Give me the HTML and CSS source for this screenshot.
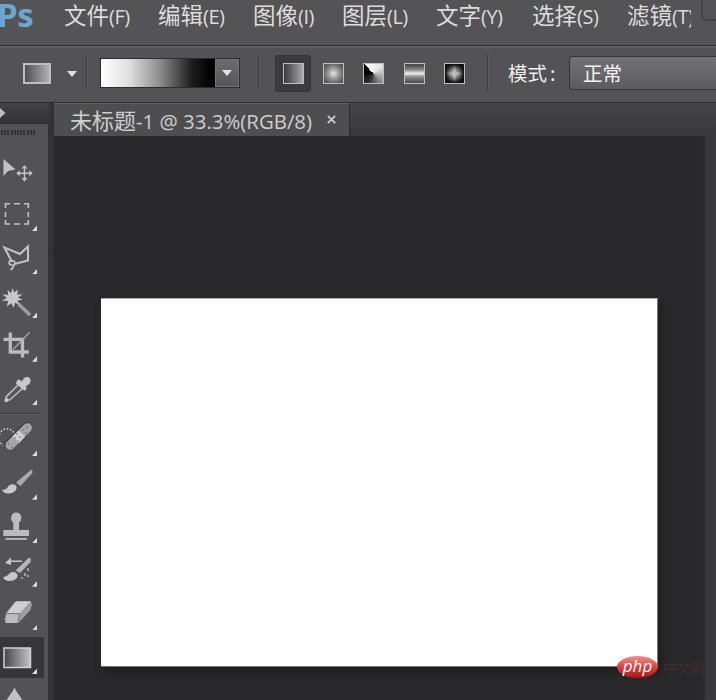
FILE: index.html
```html
<!DOCTYPE html>
<html lang="zh-CN">
<head>
<meta charset="utf-8">
<title>未标题-1</title>
<link rel="stylesheet" href="styles.css">
</head>
<body>
<div class="app">
  <header class="menubar">
    <div class="logo">Ps</div>
    <nav class="menus">
      <span>文件<i>(F)</i></span><span>编辑<i>(E)</i></span><span>图像<i>(I)</i></span><span>图层<i>(L)</i></span><span>文字<i>(Y)</i></span><span>选择<i>(S)</i></span><span class="cut">滤镜<i>(T)</i></span>
    </nav>
    <div class="window-corner"></div>
  </header>

  <section class="options">
    <div class="preset"></div>
    <div class="caret"></div>
    <div class="divider first"></div>
    <div class="picker"><div class="ramp"></div><div class="drop"><div class="caret"></div></div></div>
    <div class="divider second"></div>
    <div class="modes">
      <div class="mode on"><b class="linear"></b></div>
      <div class="mode"><b class="radial"></b></div>
      <div class="mode"><b class="angle"></b></div>
      <div class="mode"><b class="reflected"></b></div>
      <div class="mode"><b class="diamond"></b></div>
    </div>
    <div class="divider third"></div>
    <div class="label">模式<i>:</i></div>
    <div class="select">正常</div>
  </section>

  <main class="work">
    <aside class="toolbar">
      <div class="collapse"><svg width="6" height="10" viewBox="0 0 6 10"><path d="M0 0L5.500 5L0 10Z" fill="#bdbcbe"/></svg></div>
      <div class="grip"></div>
      <div class="tool"><svg viewBox="0 0 44 43.6">
        <path d="M3.500 10V27L8 22L15.500 20.500Z" fill="#c2c1c3"/>
        <path d="M24.500 17.500V31M17.500 24.200H31.500" stroke="#c2c1c3" stroke-width="1.500"/>
        <path d="M24.500 16l3 3.500h-6zM24.500 32.400l3-3.500h-6zM16.300 24.200l3.500-3v6zM32.700 24.200l-3.500-3v6z" fill="#c2c1c3"/>
      </svg></div>
      <div class="tool more"><svg viewBox="0 0 44 43.6">
        <path d="M5.500 15v-4.300H10M14 10.700h6M24 10.700h4.300V15M28.300 19v5M28.300 27v4H24M20 31h-6M10 31H5.500v-4M5.500 24v-5" fill="none" stroke="#c2c1c3" stroke-width="1.600"/>
      </svg></div>
      <div class="tool more"><svg viewBox="0 0 44 43.6">
        <path d="M12 26L4.500 11.500L20 18L28 10.500V24.500L14.500 28" fill="none" stroke="#c2c1c3" stroke-width="2.100"/>
        <path d="M9 25.500c4-2 7 0 5.500 2.500s-6 1-5.500-2.500M14 28.500c0 3-1 4-3.500 5.500" fill="none" stroke="#c2c1c3" stroke-width="1.600"/>
      </svg></div>
      <div class="tool more"><svg viewBox="0 0 44 43.6">
        <path d="M18.500 24L30 35" stroke="#9d9c9e" stroke-width="3.600"/>
        <path d="M12.500 8l1.700 4.600 3.800-3-.8 4.800 5.300.1-4.600 3 4.900 2.200-5.300.7 2.200 4.700-4.600-2.300-1.600 5.200-2-4.700-4.700 3 1.400-5.200-6.300-.5 5-2.500-4.500-3.800 5.800.8-.6-5 3.500 3.200z" fill="#c8c7c9"/>
      </svg></div>
      <div class="tool more"><svg viewBox="0 0 44 43.6">
        <path d="M10.300 8.500V28H28.800M3.500 15.300H22.500V33.500" fill="none" stroke="#bcbbbd" stroke-width="3.300"/>
        <path d="M13 25.500L29.500 8.500" stroke="#aaa9ab" stroke-width="1.300"/>
      </svg></div>
      <div class="tool more"><svg viewBox="0 0 44 43.6">
        <path d="M19 17L6.500 29.500L5.500 34L10 32.700L23 21" fill="#59585a" stroke="#c2c1c3" stroke-width="1.500"/>
        <path d="M17 13.500l2-1 3 2c1.500-3.500 3.500-5 6.500-4.200 2.500 1 3 4.500.5 7l-3 2 .5 3-2 1.500-8.500-7z" fill="#c8c7c9"/>
        <circle cx="6.500" cy="33" r="2" fill="#c8c7c9"/>
      </svg></div>
      <div class="rule"></div>
      <div class="tool more"><svg viewBox="0 0 44 43.6">
        <path d="M13.500 14.500A8 9 0 1 0 3 27.500" fill="none" stroke="#d5d4d6" stroke-width="1.500" stroke-dasharray="1.500 1.800"/>
        <path d="M9.500 26.500L27 9" stroke="#444345" stroke-width="10.500" stroke-linecap="round"/>
        <path d="M10 27.200L27.500 9.700" stroke="#a6a5a7" stroke-width="9" stroke-linecap="round"/>
        <path d="M12.500 18.500l6-6 6.500 6-6 6.500z" fill="#d0cfd1"/>
        <path d="M9 26h0M12 29h0M17 16h0M20 19h0M15 20h0M18 23h0M23 12h0M26 15h0M27 9h0" stroke="#646365" stroke-width="1.600" stroke-linecap="round"/>
      </svg></div>
      <div class="tool more"><svg viewBox="0 0 44 43.6">
        <path d="M31.500 7.500C32.500 8.500 33 9.500 32 11.500L20.500 24L16 20.500Z" fill="#aaa9ab"/>
        <path d="M2 28c4-.4 5-1.500 6.500-4 2-2.500 7-2.200 8 .5 1 4-3.500 7-7.500 7-4 .2-6-1.500-7-3.500z" fill="#c8c7c9"/>
      </svg></div>
      <div class="tool more"><svg viewBox="0 0 44 43.6">
        <path d="M13.300 17.500c-3.500-2-3-10 3-10s6.500 8 2.700 10v7.500h10V31H3.300v-6h10z" fill="#bcbbbd"/>
        <path d="M5.500 33.900H27" stroke="#c8c7c9" stroke-width="1.600"/>
      </svg></div>
      <div class="tool more"><svg viewBox="0 0 44 43.6">
        <path d="M5 14l6-5.500v3h11v1.500H11v3z" fill="#c8c7c9"/>
        <path d="M29 8.500l2 1.500-.5 3L20 24l-4.500-2.500z" fill="#b5b4b6"/>
        <path d="M3 28c4-.5 5-2 7-4 2.500-2 7-1 7.500 2s-3 6-7.500 6-6-2-7-4z" fill="#c8c7c9"/>
        <path d="M28 19v3M25 24v3M21 29h2M28 26v2" stroke="#bab9bb" stroke-width="1.500"/>
      </svg></div>
      <div class="tool more"><svg viewBox="0 0 44 43.6">
        <path d="M14.500 10.500L17 9H30.500L32 12L30.500 18L18.500 31H6L4.500 28L6 21Z" fill="#9e9da0"/>
        <path d="M16 9.500H30.500L19.500 21.500H6.500Z" fill="#cfced0"/>
        <path d="M6.500 21.500H19.500L17.500 31H5.500z" fill="#bbbabc"/>
        <path d="M6.500 21.500H19.500L18 31" fill="none" stroke="#777678"/>
      </svg></div>
      <div class="tool more on"><svg viewBox="0 0 44 43.6">
        <defs><linearGradient id="g"><stop offset="0" stop-color="#454446"/><stop offset="1" stop-color="#c4c3c5"/></linearGradient></defs>
        <rect x="4" y="12" width="26.500" height="19.500" fill="url(#g)" stroke="#d2d1d3" stroke-width="1.500"/>
      </svg></div>
      <div class="tool"><svg viewBox="0 0 44 43.6"><path d="M14.500 7.500C17 14 24 19 24 27H5c0-8 7-13 9.500-19.500z" fill="#c2c1c3"/></svg></div>
    </aside>

    <section class="document">
      <div class="tabs"><div class="tab"><span>未标题<i>-1 @ 33.3%(RGB/8)</i></span><svg class="close" width="9" height="9" viewBox="0 0 9 9"><path d="M.8.8L8.200 8.200M8.200.8L.8 8.200" stroke="#cfced0" stroke-width="1.700"/></svg></div></div>
      <div class="stage">
        <div class="pasteboard"><div class="canvas"></div></div>
        <div class="scroll"></div>
      </div>
    </section>
  </main>
  <div class="mark"><div class="badge">php</div><span>中文网</span></div>
</div>
</body>
</html>
```
FILE: styles.css
```css
* { box-sizing: border-box; }
body {
  margin: 0;
  background: #29282a;
  font-family: "Noto Sans CJK SC", sans-serif;
  color: #dddcde;
}
i { font-style: normal; }
.app {
  position: relative;
  width: 716px;
  height: 700px;
  overflow: hidden;
  display: flex;
  flex-direction: column;
}
.menubar {
  flex: 0 0 45px;
  display: flex;
  background: #545355;
}
.logo {
  width: 64px;
  margin-left: -3px;
  font: bold 33px/29px "Open Sans", sans-serif;
  letter-spacing: -.5px;
  color: #6ea6d2;
}
.menus {
  width: 632px;
  margin-left: 3px;
  display: grid;
  grid-template-columns: 94px 95px 89px 94px 96px 95px 66px;
  font-size: 22.5px;
  line-height: 29px;
  height: 34px;
  white-space: nowrap;
}
.menus i {
  font: 20px/29px "Open Sans", sans-serif;
  letter-spacing: -.5px;
}
.menus .cut { overflow: hidden; width: 64px; }
.window-corner {
  flex: 1;
  height: 21px;
  margin-left: 5px;
  border-left: 2px solid #434244;
  border-bottom: 2px solid #434244;
  border-bottom-left-radius: 5px;
}
.options {
  flex: 0 0 58px;
  display: flex;
  align-items: center;
  padding-left: 23px;
  background: #535254;
  border-top: 1px solid #333234;
  border-bottom: 1px solid #2f2e30;
  box-shadow: inset 0 1px #656466, inset 0 2px #5c5b5d;
}
.options > * { margin-top: -2px; flex-shrink: 0; }
.preset {
  width: 28px;
  height: 21px;
  border: 2px solid #bfbec0;
  background: linear-gradient(90deg, #504f51, #b0afb1);
}
.caret {
  width: 10px;
  height: 6px;
  background: #e2e1e3;
  clip-path: polygon(0 0, 100% 0, 50% 100%);
}
.preset + .caret { margin-left: 16px; margin-top: 0; }
.divider {
  width: 2px;
  height: 38px;
  background: #403f41;
  border-right: 1px solid #5c5b5d;
}
.first { margin-left: 9px; }
.second { margin-left: 18px; }
.third { margin-left: 14px; }
.picker {
  display: flex;
  width: 140px;
  height: 30px;
  margin-left: 12px;
  border: 1px solid #2d2c2e;
  background: #2d2c2e;
}
.ramp {
  width: 114px;
  background: linear-gradient(90deg, #fff, #dedede 25%, #8b8b8b 52%, #1c1c1c 80%, #000 96%);
}
.drop {
  flex: 1;
  display: flex;
  align-items: center;
  justify-content: center;
  background: linear-gradient(#6c6b6d, #565557);
  border: 1px solid #737274;
}
.modes {
  display: flex;
  margin-left: 15px;
  gap: 4px;
}
.mode {
  display: flex;
  width: 36.4px;
  height: 37px;
  align-items: center;
  justify-content: center;
}
.mode.on {
  background: #3b3a3c;
  border: 1px solid #353436;
  border-radius: 3px;
}
.mode b {
  width: 21px;
  height: 21px;
  border: 1.5px solid #bebdbf;
}
.linear { background: linear-gradient(90deg, #3a393b, #aaa9ab); }
.radial { background: radial-gradient(circle, #ddd 5%, #999 40%, #555456 85%); }
.angle { background: conic-gradient(from -45deg, #fff, #e4e4e4 25%, #999 48%, #333 70%, #000 90%); }
.reflected { background: linear-gradient(#4b4a4c 5%, #888 30%, #eee 50%, #888 68%, #4b4a4c); }
.diamond {
  background:
    linear-gradient(90deg, transparent 10%, #bbb 50%, transparent 90%) center / 100% 3px no-repeat,
    linear-gradient(transparent 10%, #bbb 50%, transparent 90%) center / 3px 100% no-repeat,
    radial-gradient(circle, #ddd, #777 35%, #111 70%);
}
.label {
  width: 61px;
  margin-left: 19px;
  font-size: 19.5px;
  line-height: 30px;
  color: #efeef0;
}
.label i { margin-left: 3px; }
.select {
  flex: 1;
  height: 34px;
  padding-left: 13px;
  font-size: 19.5px;
  line-height: 31px;
  color: #f4f3f5;
  border: 1px solid #363537;
  border-right: 0;
  border-radius: 4px 0 0 4px;
  background: linear-gradient(#737274, #5c5b5d);
}
.work {
  flex: 1;
  display: flex;
  min-height: 0;
}
.toolbar {
  flex: 0 0 54px;
  overflow: hidden;
  background: linear-gradient(90deg, #535254 48.5px, #323133 48.5px, #353436 52px, #2c2b2d 54px);
}
.collapse {
  width: 49px;
  height: 21px;
  padding-top: 5px;
  line-height: 0;
  background: linear-gradient(#424143, #353436);
  border-bottom: 1px solid #2f2e30;
}
.grip {
  width: 34px;
  height: 5px;
  margin: 6px 0 14.3px 1px;
  background: repeating-linear-gradient(90deg, #333234 0 2px, #535254 2px 3.2px);
}
.tool {
  position: relative;
  width: 44px;
  height: 43.6px;
}
.tool svg {
  position: relative;
  display: block;
  width: 44px;
  height: 43.6px;
}
.more::after {
  content: "";
  position: absolute;
  left: 32px;
  top: 32.5px;
  width: 5px;
  height: 5.5px;
  background: #dddcde;
  clip-path: polygon(100% 0, 100% 100%, 0 100%);
}
.tool.on {
  background: linear-gradient(#373638, #373638) 0 1px / 44px 41px no-repeat;
  border-radius: 3px;
}
.rule {
  width: 41px;
  height: 2px;
  margin: 2.6px 0;
  background: #3f3e40;
  border-bottom: 1px solid #5c5b5d;
}
.document {
  flex: 1;
  display: flex;
  flex-direction: column;
}
.tabs {
  flex: 0 0 33px;
  background: linear-gradient(#444345, #39383a);
}
.tab {
  display: flex;
  align-items: center;
  width: 296px;
  height: 33px;
  padding-left: 16px;
  background: #4e4d4f;
  border-top: 1px solid #626163;
  border-right: 1px solid #2d2c2e;
  font-size: 22px;
  line-height: 30px;
  white-space: nowrap;
  color: #cfced0;
}
.tab span { width: 257px; }
.tab i {
  font: 20.4px/30px "Open Sans", sans-serif;
}
.close { margin-bottom: 2px; }
.stage {
  flex: 1;
  display: flex;
}
.pasteboard {
  flex: 1;
  padding: 162px 0 0 47px;
  background: #29282a;
}
.canvas {
  width: 557px;
  height: 369px;
  background: #fff;
  border-top: 1px solid #aaa;
  border-right: 1px solid #777;
  border-bottom: 1px solid #777;
  box-shadow: 3px 5px 7px #1d1c1e;
}
.scroll {
  width: 13px;
  background: linear-gradient(90deg, #29282a, #39383a 4px, #3d3c3e);
}
.mark {
  position: absolute;
  left: 617px;
  top: 656px;
  display: flex;
  align-items: center;
  font-size: 14px;
  line-height: 22px;
  color: #452c2e;
}
.mark span { margin-left: 5px; }
.badge {
  width: 41px;
  height: 22px;
  border-radius: 50%;
  background: linear-gradient(#ef9590, #d94343 48%, #a91519);
  font: italic 500 17px/19px "Open Sans", sans-serif;
  text-align: center;
  color: #fff;
}
```
